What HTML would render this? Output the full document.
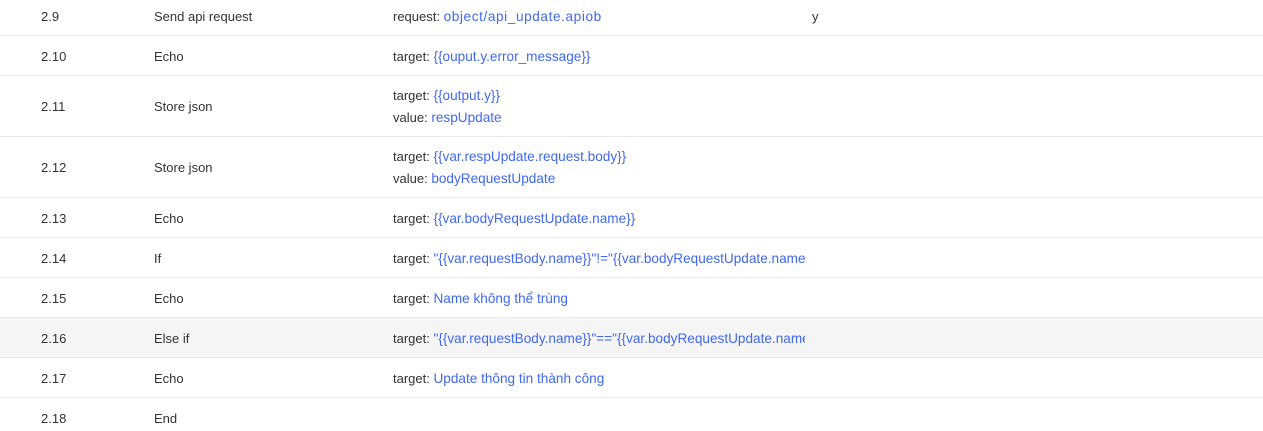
<!DOCTYPE html>
<html><head><meta charset="utf-8"><style>
html,body{margin:0;padding:0;background:#fff;width:1263px;height:431px;overflow:hidden;}
body{font-family:"Liberation Sans",sans-serif;font-size:13px;color:#333;position:relative;}
.row{position:absolute;left:0;width:1263px;border-bottom:1px solid #e8e8e8;box-sizing:border-box;}
.c{position:absolute;white-space:nowrap;line-height:20px;}
.n{left:41px}.t{left:154px}.p{left:393px;width:412px;overflow:hidden}
.b{color:#4068f2;font-size:13.6px}
</style></head><body>
<div class="row" style="top:0;height:36px"><span class="c n" style="top:7px">2.9</span><span class="c t" style="top:7px">Send api request</span><span class="c p" style="top:7px">request: <span class="b" style="letter-spacing:0.6px">object/api_update.apiob</span></span><span class="c" style="left:812px;top:7px">y</span></div>
<div class="row" style="top:36px;height:40px"><span class="c n" style="top:11px">2.10</span><span class="c t" style="top:11px">Echo</span><span class="c p" style="top:11px">target: <span class="b">{{ouput.y.error_message}}</span></span></div>
<div class="row" style="top:76px;height:61px"><span class="c n" style="top:21px">2.11</span><span class="c t" style="top:21px">Store json</span><span class="c p" style="top:10px">target: <span class="b">{{output.y}}</span></span><span class="c p" style="top:32px">value: <span class="b">respUpdate</span></span></div>
<div class="row" style="top:137px;height:61px"><span class="c n" style="top:21px">2.12</span><span class="c t" style="top:21px">Store json</span><span class="c p" style="top:10px">target: <span class="b">{{var.respUpdate.request.body}}</span></span><span class="c p" style="top:32px">value: <span class="b">bodyRequestUpdate</span></span></div>
<div class="row" style="top:198px;height:40px"><span class="c n" style="top:11px">2.13</span><span class="c t" style="top:11px">Echo</span><span class="c p" style="top:11px">target: <span class="b">{{var.bodyRequestUpdate.name}}</span></span></div>
<div class="row" style="top:238px;height:40px"><span class="c n" style="top:11px">2.14</span><span class="c t" style="top:11px">If</span><span class="c p" style="top:11px">target: <span class="b">"{{var.requestBody.name}}"!="{{var.bodyRequestUpdate.name}}"</span></span></div>
<div class="row" style="top:278px;height:40px"><span class="c n" style="top:11px">2.15</span><span class="c t" style="top:11px">Echo</span><span class="c p" style="top:11px">target: <span class="b">Name không thể trùng</span></span></div>
<div class="row" style="top:318px;height:40px;background:#f5f5f5"><span class="c n" style="top:11px">2.16</span><span class="c t" style="top:11px">Else if</span><span class="c p" style="top:11px">target: <span class="b">"{{var.requestBody.name}}"=="{{var.bodyRequestUpdate.name}}"</span></span></div>
<div class="row" style="top:358px;height:40px"><span class="c n" style="top:11px">2.17</span><span class="c t" style="top:11px">Echo</span><span class="c p" style="top:11px">target: <span class="b">Update thông tin thành công</span></span></div>
<div class="row" style="top:398px;height:40px;border-bottom:none"><span class="c n" style="top:11px">2.18</span><span class="c t" style="top:11px">End</span></div>
</body></html>
